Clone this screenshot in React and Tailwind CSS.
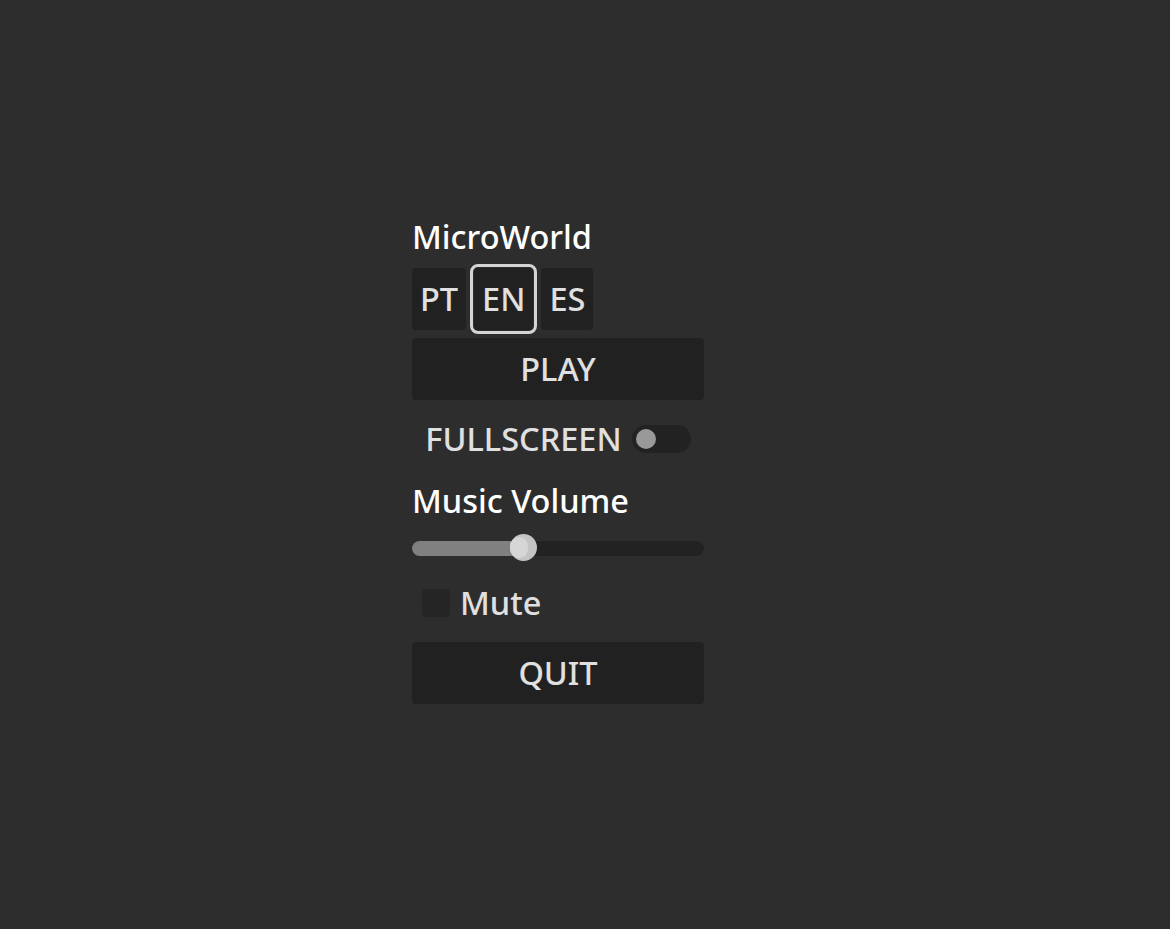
export default function App() {
  const font = { fontFamily: '"Noto Sans", "Open Sans", sans-serif' };
  return (
    <div className="min-h-[929px] w-full bg-[#2d2d2d] pt-[214px] pl-[412px]" style={font}>
      <div className="flex w-[292px] flex-col gap-2">
        <div className="h-[46px] text-[32.5px] leading-[46px] font-medium text-white">MicroWorld</div>

        <div className="flex gap-2">
          {['PT', 'EN', 'ES'].map((l) => (
            <button
              key={l}
              className={`h-[62px] rounded bg-[#212121] px-2 text-[32.5px] font-medium text-[#e0e0e0] ${
                l === 'EN' ? 'outline-[3px] outline-offset-[1px] outline-[#d4d4d4] outline' : ''
              }`}
            >
              {l}
            </button>
          ))}
        </div>

        <button className="h-[62px] rounded bg-[#212121] text-[32.5px] font-medium text-[#e0e0e0]">PLAY</button>

        <div className="flex h-[62px] items-center justify-center gap-[10px]">
          <span className="text-[32.5px] font-medium text-[#e0e0e0]">FULLSCREEN</span>
          <div className="flex h-[28px] w-[59px] items-center rounded-full bg-[#222222] pl-1">
            <div className="h-5 w-5 rounded-full bg-[#999999]" />
          </div>
        </div>

        <div className="h-[46px] text-[32.5px] leading-[46px] font-medium text-white">Music Volume</div>

        <div className="relative flex h-8 items-center">
          <div className="h-[15px] w-full rounded-full bg-[#222222]">
            <div className="h-full w-[112px] rounded-full bg-[#808080]" />
          </div>
          <div className="absolute left-[98px] top-[2px] h-[27px] w-[27px] rounded-full bg-[#c4c4c4]">
            <div className="absolute left-0 top-[3px] h-[21px] w-[18px] rounded-full bg-[#d6d6d6]" />
          </div>
        </div>

        <div className="flex h-[62px] items-center gap-[10px] pl-[10px]">
          <div className="h-7 w-7 rounded bg-[#252525]" />
          <span className="text-[32.5px] font-medium text-[#e0e0e0]">Mute</span>
        </div>

        <button className="h-[62px] rounded bg-[#212121] text-[32.5px] font-medium text-[#e0e0e0]">QUIT</button>
      </div>
    </div>
  );
}
